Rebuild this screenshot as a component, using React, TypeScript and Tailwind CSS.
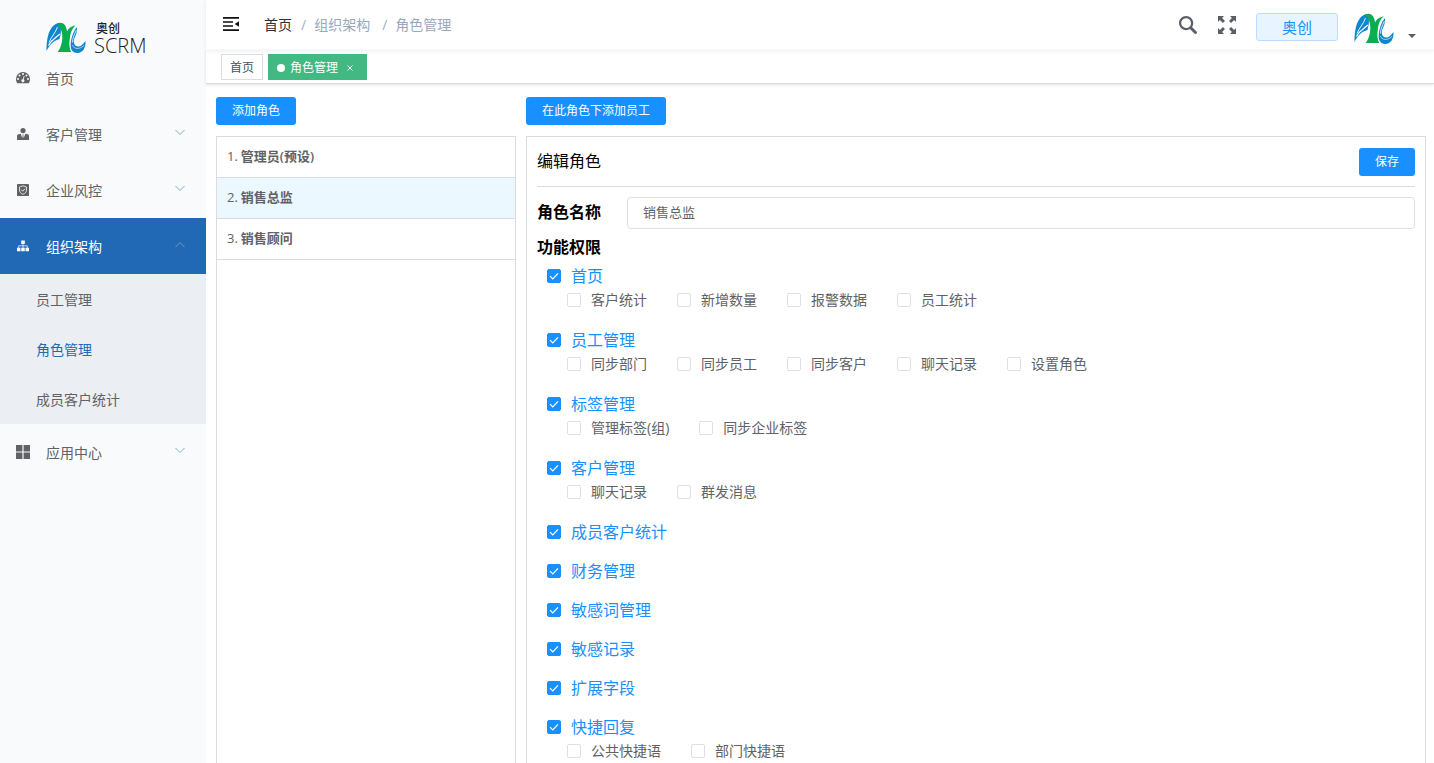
import { useState, type ReactNode } from "react";

type Child = { label: string };
type Group = { label: string; children: Child[] };

const names = (...labels: string[]): Child[] => labels.map((label) => ({ label }));

const GROUPS: Group[] = [
  { label: "首页", children: names("客户统计", "新增数量", "报警数据", "员工统计") },
  { label: "员工管理", children: names("同步部门", "同步员工", "同步客户", "聊天记录", "设置角色") },
  { label: "标签管理", children: names("管理标签(组)", "同步企业标签") },
  { label: "客户管理", children: names("聊天记录", "群发消息") },
  { label: "成员客户统计", children: [] },
  { label: "财务管理", children: [] },
  { label: "敏感词管理", children: [] },
  { label: "敏感记录", children: [] },
  { label: "扩展字段", children: [] },
  { label: "快捷回复", children: names("公共快捷语", "部门快捷语") },
];

const ROLES = ["管理员(预设)", "销售总监", "销售顾问"];

function LogoMark({ className }: { className: string }) {
  return (
    <svg viewBox="0 0 40 31" className={className} aria-hidden="true">
      <path d="M.5 28.500C.5 20 1.500 12 4.500 7C6.500 3.500 9 1.500 12 .8C15 3 15.500 7 14.500 12L13.500 16.500C8 18 4 21.500 .5 28.500Z" fill="#0b86cf" />
      <path d="M3 20C5 14.500 9.500 10.500 11.500 4.500" fill="none" stroke="#fff" strokeWidth="0.900" />
      <path d="M2.500 23C5.500 17 9.500 15.500 14 11.500" fill="none" stroke="#fff" strokeWidth="1.300" />
      <path d="M10.500 1.200C14 -.8 18 .3 19.500 3.500C20.500 5.800 20.800 7.500 21 9C22.500 6 25 3.800 29.500 2.800C26 6.500 24.500 10 24 14.500C23.300 21 23.500 25.500 25.500 29.500H11.500C14.500 26 16.500 20 16.300 13.500C16 8 14 3.500 10.500 1.200Z" fill="#0aad4f" />
      <path d="M29.500 5C25.500 9.500 24.500 15 24 21.500C24 25 24.500 27.500 26 29.500" fill="none" stroke="#fff" strokeWidth="1" />
      <path d="M31 4.500C31.500 9 30 12 28.500 15.500C27 19.500 28 23.500 32 24C35 24 37 22 39.500 18.500C40 25.500 36.500 30.500 31.500 30.500C26 30.500 24 26 24.800 20C25.500 14.500 27.500 8.500 31 4.500Z" fill="#0b86cf" />
      <path d="M30.500 7.500C28 12.500 26.500 16 26.500 20" fill="none" stroke="#fff" strokeWidth="0.800" />
      <path d="M26.300 22.500C28 26.500 33 27.500 38 23" fill="none" stroke="#fff" strokeWidth="0.600" />
    </svg>
  );
}

function DashboardIcon() {
  return (
    <svg viewBox="0 0 14 12" className="h-3 w-3.5" fill="currentColor" fillRule="evenodd" aria-hidden="true">
      <path d="M7 0A7 7 0 0 1 14 7C14 8.7 13.5 10 12.8 11.3H1.2C.5 10 0 8.700 0 7A7 7 0 0 1 7 0ZM2 6a1 1 0 1 0 0 2a1 1 0 1 0 0-2ZM3.500 2.500a1 1 0 1 0 0 2a1 1 0 1 0 0-2ZM7 1a1 1 0 1 0 0 2a1 1 0 1 0 0-2ZM10.500 2.500a1 1 0 1 0 0 2a1 1 0 1 0 0-2ZM12 6a1 1 0 1 0 0 2a1 1 0 1 0 0-2ZM7.800 4.100L6.800 7.200A1.500 1.500 0 1 0 7.700 7.400L8.600 4.300Z" />
    </svg>
  );
}

function PeopleIcon() {
  return (
    <svg viewBox="0 0 12 12" className="mx-px size-3" fill="currentColor" aria-hidden="true">
      <circle cx="6" cy="2.600" r="2.600" />
      <path d="M0 12V8Q0 6.500 1.500 6.200L3.600 5.800L5.300 10L5.700 7.600L5.300 6.400H6.700L6.300 7.600L6.700 10L8.400 5.800L10.500 6.200Q12 6.500 12 8V12Z" />
    </svg>
  );
}

function ShieldIcon() {
  return (
    <svg viewBox="0 0 12 12" className="mx-px size-3" aria-hidden="true">
      <rect width="12" height="12" rx="0.600" fill="currentColor" />
      <path d="M6 1.800L9.500 3V6C9.500 8 8 9.500 6 10.300C4 9.500 2.500 8 2.500 6V3Z" fill="none" stroke="#f9fafc" strokeWidth="0.800" />
      <path d="M4.300 5.800L5.700 7.200L8 4.700" fill="none" stroke="#f9fafc" strokeWidth="0.900" />
    </svg>
  );
}

function TreeIcon() {
  return (
    <svg viewBox="0 0 12 12" className="mx-px size-3" fill="currentColor" aria-hidden="true">
      <path d="M4.200 .5H7.800V4H4.200ZM0 7.800H3.500V11.300H0ZM4.250 7.800H7.750V11.300H4.250ZM8.500 7.800H12V11.300H8.500Z" />
      <path d="M6 4V8M1.700 8V5.800H10.300V8" fill="none" stroke="currentColor" strokeWidth="0.700" />
    </svg>
  );
}

function GridIcon() {
  return (
    <svg viewBox="0 0 14 14" className="size-3.5" fill="currentColor" aria-hidden="true">
      <path d="M0 0H6.400V6.400H0ZM7.600 0H14V6.400H7.600ZM0 7.600H6.400V14H0ZM7.600 7.600H14V14H7.600Z" />
    </svg>
  );
}

function Chevron({ up }: { up?: boolean }) {
  return (
    <svg viewBox="0 0 12 12" className={up ? "mb-1 size-3 text-[#6f9bb5]" : "mb-1 size-3 text-[#86abc8]"} fill="none" stroke="currentColor" aria-hidden="true">
      <path d={up ? "M1.500 9L6 4.500L10.500 9" : "M1.500 4L6 8.500L10.500 4"} />
    </svg>
  );
}

function MenuItem({ icon, label, arrow, active }: { icon: ReactNode; label: string; arrow?: boolean; active?: boolean }) {
  return (
    <a
      href="#"
      className={
        active
          ? "flex h-14 items-center bg-[#2269b5] px-4 text-sm text-white"
          : "flex h-14 items-center px-4 text-sm text-[#606266]"
      }
    >
      <span className="mr-4 flex w-3.5 shrink-0 justify-center">{icon}</span>
      <span className="flex-1 pt-0.5">{label}</span>
      {arrow && (
        <span className="mr-1">
          <Chevron up={active} />
        </span>
      )}
    </a>
  );
}

function Sidebar() {
  const sub = ["员工管理", "角色管理", "成员客户统计"];
  return (
    <aside className="w-[206px] shrink-0 bg-[#f9fafc]">
      <div className="flex h-[50px] items-start pt-[22px] pl-[46px]">
        <LogoMark className="h-8 w-10 shrink-0" />
        <div className="ml-2 text-[#222]">
          <div className="pl-0.5 text-xs leading-[14px] font-medium">奥创</div>
          <div className="text-xl leading-5 font-light">SCRM</div>
        </div>
      </div>
      <nav>
        <MenuItem icon={<DashboardIcon />} label="首页" />
        <MenuItem icon={<PeopleIcon />} label="客户管理" arrow />
        <MenuItem icon={<ShieldIcon />} label="企业风控" arrow />
        <MenuItem icon={<TreeIcon />} label="组织架构" arrow active />
        <ul className="bg-[#ebeef3]">
          {sub.map((label) => (
            <li key={label}>
              <a
                href="#"
                className={
                  label === "角色管理"
                    ? "flex h-[50px] items-center px-9 pt-0.5 text-sm text-[#2269b5]"
                    : "flex h-[50px] items-center px-9 pt-0.5 text-sm text-[#606266]"
                }
              >
                {label}
              </a>
            </li>
          ))}
        </ul>
        <MenuItem icon={<GridIcon />} label="应用中心" arrow />
      </nav>
    </aside>
  );
}

function Navbar() {
  return (
    <header className="flex h-[50px] shrink-0 items-center justify-between pr-[18px] pl-4 shadow-[0_1px_4px_rgba(0,21,41,0.08)]">
      <div className="flex items-center">
        <button type="button" aria-label="折叠菜单" className="mr-6 mb-0.5">
          <svg viewBox="0 0 18 16" className="h-4 w-[18px] text-[#111]" fill="currentColor" aria-hidden="true">
            <path d="M1 1H17V2.700H1ZM1 5.200H11V6.800H1ZM1 9.200H11V10.800H1ZM1 13.300H17V15H1ZM17 5.300V10.700L12.800 8Z" />
          </svg>
        </button>
        <nav className="flex text-sm">
          <a href="#" className="text-[#303133]">首页</a>
          <span className="mr-2 ml-[9px] text-[#a4aec0]">/</span>
          <a href="#" className="text-[#97a8be]">组织架构</a>
          <span className="mr-2 ml-3 text-[#a4aec0]">/</span>
          <span className="text-[#97a8be]">角色管理</span>
        </nav>
      </div>
      <div className="flex items-center">
        <button type="button" aria-label="搜索" className="mr-[21px]">
          <svg viewBox="0 0 128 128" className="size-[18px] text-[#5a5e66]" fill="currentColor" aria-hidden="true">
            <path d="M124.884 109.812L94.256 79.166c-.357-.357-.757-.629-1.129-.914a50.366 50.366 0 0 0 8.186-27.590C101.327 22.689 78.656 0 50.670 0 22.685 0 0 22.688 0 50.663c0 27.989 22.685 50.663 50.656 50.663 10.186 0 19.651-3.030 27.600-8.201.286.385.557.771.9 1.114l30.628 30.632a10.633 10.633 0 0 0 7.543 3.129c2.728 0 5.457-1.043 7.543-3.115 4.171-4.157 4.171-10.915.014-15.073M50.671 85.338C31.557 85.338 16 69.780 16 50.663c0-19.102 15.557-34.661 34.670-34.661 19.115 0 34.657 15.559 34.657 34.675 0 19.102-15.557 34.661-34.656 34.661" />
          </svg>
        </button>
        <button type="button" aria-label="全屏" className="mr-5">
          <svg viewBox="0 0 18 18" className="size-[18px] text-[#5a5e66]" fill="currentColor" aria-hidden="true">
            <path d="M0 0H6L4.100 1.900L7 4.900L4.900 7L1.900 4.100L0 6ZM18 0V6L16.100 4.100L13.100 7L11 4.900L13.900 1.900L12 0ZM0 18V12L1.900 13.900L4.900 11L7 13.100L4.100 16.100L6 18ZM18 18H12L13.900 16.100L11 13.100L13.100 11L16.100 13.900L18 12Z" />
          </svg>
        </button>
        <button type="button" className="mt-1 mr-4 h-7 w-[82px] rounded-[3px] border border-[#b9deff] bg-[#e8f4ff] text-[15px] leading-6 text-[#1890ff]">
          奥创
        </button>
        <button type="button" aria-label="用户菜单" className="flex items-end">
          <LogoMark className="mt-2 h-8 w-10" />
          <svg viewBox="0 0 8 4" className="mb-[7px] ml-3.5 h-1 w-2 text-[#5a5e66]" fill="currentColor" aria-hidden="true">
            <path d="M0 0H8L4 4Z" />
          </svg>
        </button>
      </div>
    </header>
  );
}

function TagsBar() {
  return (
    <div className="flex h-[34px] shrink-0 items-center gap-[5px] border-b border-[#d8dce5] pl-[15px] text-xs shadow-[0_1px_3px_rgba(0,0,0,0.12)]">
      <a href="#" className="flex h-[26px] items-center border border-[#d8dce5] px-2 pt-0.5 text-[#495060]">
        首页
      </a>
      <div className="flex h-[26px] items-center bg-[#42b983] px-[9px] pt-0.5 text-white">
        <span className="mr-[5px] size-2 rounded-full bg-white" />
        <a href="#">角色管理</a>
        <button type="button" aria-label="关闭" className="ml-1 flex size-4 items-center justify-center">
          <svg viewBox="0 0 6 6" className="size-1.5" stroke="currentColor" strokeWidth="0.900" aria-hidden="true">
            <path d="M.5 .5L5.500 5.500M5.500 .5L.5 5.500" />
          </svg>
        </button>
      </div>
    </div>
  );
}

function PrimaryButton({ children }: { children: ReactNode }) {
  return (
    <button type="button" className="h-7 shrink-0 rounded-[3px] bg-[#1890ff] px-4 text-xs text-white">
      {children}
    </button>
  );
}

function Check({ label, initial, heading }: { label: string; initial: boolean; heading?: boolean }) {
  const [checked, setChecked] = useState(initial);
  return (
    <label
      className={
        heading
          ? "flex h-[23px] w-fit items-center gap-2.5 text-base text-[#1890ff]"
          : "flex h-[25px] items-center gap-2.5 text-sm text-[#606266]"
      }
    >
      <span className="grid size-3.5 shrink-0 place-items-center">
        <input
          type="checkbox"
          checked={checked}
          onChange={() => setChecked(!checked)}
          className="col-start-1 row-start-1 size-3.5 appearance-none rounded-xs border border-[#dcdfe6] bg-white checked:border-[#1890ff] checked:bg-[#1890ff]"
        />
        {checked && (
          <svg viewBox="0 0 14 14" className="pointer-events-none z-10 col-start-1 row-start-1 size-3.5" fill="none" stroke="#fff" strokeWidth="1.200" aria-hidden="true">
            <path d="M3 7.200L5.800 10L11 4.300" />
          </svg>
        )}
      </span>
      <span>{label}</span>
    </label>
  );
}

function RoleList() {
  return (
    <section className="flex w-[300px] shrink-0 flex-col items-start gap-[11px]">
      <PrimaryButton>添加角色</PrimaryButton>
      <ol className="w-full flex-1 border border-[#dcdcdc]">
        {ROLES.map((role, i) => (
          <li key={role} className="border-b border-[#dcdcdc]">
            <button
              type="button"
              className={
                i === 1
                  ? "flex h-10 w-full items-center gap-[3px] bg-[#ecf8ff] px-2.5 text-[13px] font-semibold text-[#606266]"
                  : "flex h-10 w-full items-center gap-[3px] px-2.5 text-[13px] font-semibold text-[#606266]"
              }
            >
              <span className="font-medium">{i + 1}.</span>
              <span>{role}</span>
            </button>
          </li>
        ))}
      </ol>
    </section>
  );
}

function RoleEditor() {
  const [name, setName] = useState("销售总监");
  return (
    <section className="flex min-w-0 flex-1 flex-col items-start gap-[11px]">
      <PrimaryButton>在此角色下添加员工</PrimaryButton>
      <div className="w-full flex-1 border border-[#dcdcdc] px-2.5 text-black">
        <div className="flex items-center justify-between border-b border-[#dcdcdc] pt-[11px] pb-2.5">
          <h2 className="pb-0.5 text-base">编辑角色</h2>
          <PrimaryButton>保存</PrimaryButton>
        </div>
        <div className="mt-2.5 flex items-center">
          <label htmlFor="role-name" className="w-[90px] shrink-0 pb-0.5 text-base font-bold">
            角色名称
          </label>
          <input
            id="role-name"
            value={name}
            onChange={(e) => setName(e.target.value)}
            className="h-8 min-w-0 flex-1 rounded border border-[#dcdfe6] px-[15px] pb-[3px] text-[13px] text-[#606266]"
          />
        </div>
        <h3 className="mt-1.5 mb-[5px] text-base leading-6 font-bold">功能权限</h3>
        <div className="flex flex-col gap-4 px-2.5">
          {GROUPS.map((group) => (
            <div key={group.label}>
              <Check label={group.label} initial heading />
              {group.children.length > 0 && (
                <div className="flex flex-wrap gap-x-[30px] pl-5">
                  {group.children.map((c) => (
                    <Check key={c.label} label={c.label} initial={false} />
                  ))}
                </div>
              )}
            </div>
          ))}
        </div>
      </div>
    </section>
  );
}

export default function App() {
  return (
    <div className="flex h-screen overflow-hidden bg-white font-['Open_Sans','Noto_Sans_CJK_SC',sans-serif]">
      <Sidebar />
      <div className="flex min-w-0 flex-1 flex-col">
        <Navbar />
        <TagsBar />
        <main className="min-h-0 flex-1 overflow-y-auto [scrollbar-width:none]">
          <div className="flex min-h-full gap-2.5 pt-[13px] pr-2 pl-2.5">
            <RoleList />
            <RoleEditor />
          </div>
        </main>
      </div>
    </div>
  );
}
